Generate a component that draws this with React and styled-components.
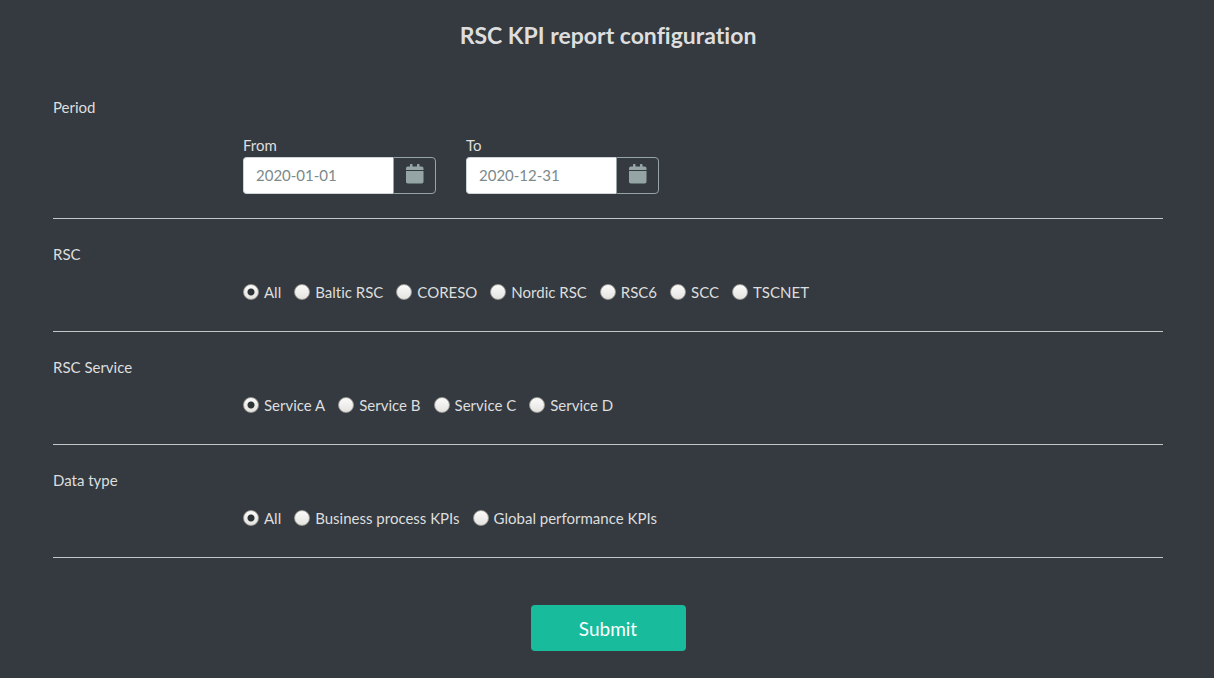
import React from "react";
import styled, { createGlobalStyle } from "styled-components";

const GlobalStyle = createGlobalStyle`
  *, *::before, *::after { box-sizing: border-box; }
  body {
    margin: 0;
    background: #343a40;
    color: #dedede;
    font-family: Lato, sans-serif;
    font-size: 15px;
    line-height: 22px;
    font-variant-ligatures: none;
  }
`;

const Page = styled.main`
  padding: 21px 51px 27px 53px;
`;

const Title = styled.h1`
  margin: 0 0 47px;
  font-size: 23px;
  font-weight: 700;
  line-height: 28px;
  text-align: center;
`;

const Section = styled.fieldset`
  margin: 0;
  padding: 0 0 ${(p) => (p.$compact ? 24 : 28)}px;
  border: 0;
  border-bottom: 1px solid #c4c6c8;

  & + & {
    padding-top: 24px;
  }
`;

const Legend = styled.legend`
  float: left;
  width: 100%;
  margin: 0 0 16px;
  padding: 0;
`;

const Fields = styled.div`
  clear: both;
  display: flex;
  flex-wrap: wrap;
  gap: ${(p) => p.$gap}px;
  padding-left: 190px;
`;

const Field = styled.div`
  display: flex;
  flex-direction: column;
  gap: 1px;
`;

const InputGroup = styled.div`
  display: flex;
  height: 37px;
`;

const DateInput = styled.input`
  width: 150px;
  padding: 0 12px 2px;
  border: 1px solid #ced4da;
  border-right: 0;
  border-radius: 4px 0 0 4px;
  background: #fff;
  color: #7b8a8b;
  font: inherit;
`;

const PickerButton = styled.button`
  display: flex;
  justify-content: center;
  width: 43px;
  padding: 6px 0 0;
  border: 1px solid #95a5a6;
  border-radius: 0 4px 4px 0;
  background: transparent;
  color: #95a5a6;
`;

const RadioLabel = styled.label`
  display: flex;
  align-items: center;
  gap: 5px;
`;

const Radio = styled.input`
  appearance: none;
  width: 16px;
  height: 16px;
  margin: 0;
  border: 1px solid #9b9a96;
  border-radius: 50%;
  background: linear-gradient(#fbfbfa, #e4e3e0);

  &:checked {
    background:
      radial-gradient(circle, #2e3436 0 3px, transparent 4px),
      linear-gradient(#fbfbfa, #e4e3e0);
  }
`;

const Actions = styled.div`
  display: flex;
  justify-content: center;
  padding-top: 47px;
`;

const SubmitButton = styled.button`
  width: 155px;
  height: 46px;
  padding: 0;
  border: 0;
  border-radius: 4px;
  background: #18bc9c;
  color: #fff;
  font-family: inherit;
  font-size: 19px;
`;

function CalendarIcon() {
  return (
    <svg width="18" height="20" viewBox="0 0 18 20" fill="currentColor" aria-hidden="true">
      <path d="M0 6V4.2Q0 2.5 1.8 2.5H4V.5Q4 0 4.5 0H6Q6.5 0 6.5 .5V2.5H11V.5Q11 0 11.5 0H13Q13.5 0 13.5 .5V2.5H15.7Q17.5 2.5 17.5 4.2V6Z" />
      <path d="M0 7H17.5V17.7Q17.5 19.5 15.7 19.5H1.8Q0 19.5 0 17.7Z" />
    </svg>
  );
}

function DateField({ id, label, value }) {
  return (
    <Field>
      <label htmlFor={id}>{label}</label>
      <InputGroup>
        <DateInput id={id} type="text" defaultValue={value} />
        <PickerButton type="button" aria-label={`Choose date: ${label}`}>
          <CalendarIcon />
        </PickerButton>
      </InputGroup>
    </Field>
  );
}

function RadioSection({ title, name, options }) {
  return (
    <Section>
      <Legend>{title}</Legend>
      <Fields $gap={13}>
        {options.map((option, i) => (
          <RadioLabel key={option}>
            <Radio type="radio" name={name} value={option} defaultChecked={i === 0} />
            {option}
          </RadioLabel>
        ))}
      </Fields>
    </Section>
  );
}

export default function App() {
  return (
    <>
      <GlobalStyle />
      <Page>
        <Title>RSC KPI report configuration</Title>
        <form onSubmit={(e) => e.preventDefault()}>
          <Section $compact>
            <Legend>Period</Legend>
            <Fields $gap={30}>
              <DateField id="from" label="From" value="2020-01-01" />
              <DateField id="to" label="To" value="2020-12-31" />
            </Fields>
          </Section>
          <RadioSection
            title="RSC"
            name="rsc"
            options={["All", "Baltic RSC", "CORESO", "Nordic RSC", "RSC6", "SCC", "TSCNET"]}
          />
          <RadioSection
            title="RSC Service"
            name="service"
            options={["Service A", "Service B", "Service C", "Service D"]}
          />
          <RadioSection
            title="Data type"
            name="dataType"
            options={["All", "Business process KPIs", "Global performance KPIs"]}
          />
          <Actions>
            <SubmitButton type="submit">Submit</SubmitButton>
          </Actions>
        </form>
      </Page>
    </>
  );
}
